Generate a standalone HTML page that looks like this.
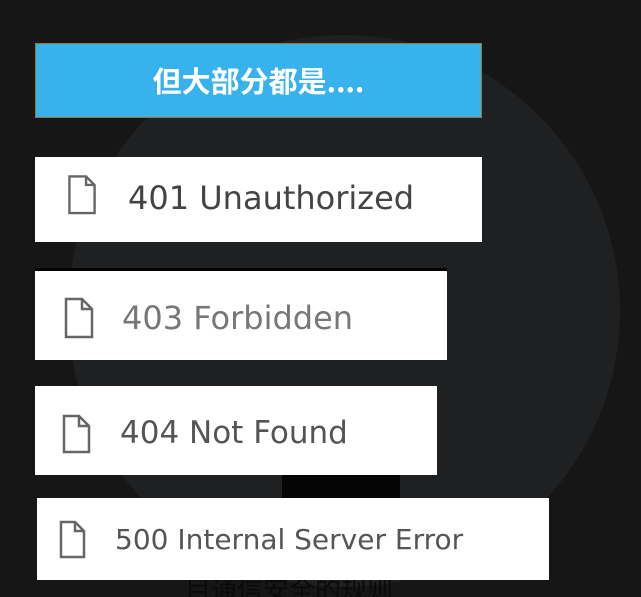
<!DOCTYPE html>
<html><head><meta charset="utf-8"><style>
html{margin:0;padding:0;width:641px;height:597px;overflow:hidden}
body{margin:0;padding:0;width:641px;height:597px;overflow:hidden;position:relative;background:#161616;font-family:"Liberation Sans","Noto Sans CJK SC",sans-serif}
.circle{position:absolute;left:68px;top:35px;width:552px;height:552px;border-radius:50%;background:#1f2022}
.blk{position:absolute;left:282px;top:470px;width:118px;height:70px;background:#050505;border-radius:0 0 40px 40px}
.bottomtxt{position:absolute;left:185px;top:574px;font-size:26px;line-height:30px;color:#0a0a0a;white-space:nowrap;font-family:"Noto Sans CJK SC",sans-serif}
.box{position:absolute;background:#fff}
.banner{position:absolute;left:35px;top:43px;width:445px;height:73px;background:#38b2ec;border:1px solid #9a7a2a;color:#fff;font-weight:bold;font-size:29px;text-align:center;line-height:73px;font-family:"Noto Sans CJK SC","Liberation Sans",sans-serif}
.t{position:absolute;font-family:"DejaVu Sans","Liberation Sans",sans-serif;color:#444;white-space:nowrap;line-height:36px}
svg{position:absolute}
</style></head><body>
<div class="circle"></div>
<div class="blk"></div>
<div class="bottomtxt">目通信安全的规则</div>
<div class="banner">但大部分都是....</div>

<div class="box" style="left:35px;top:157px;width:447px;height:85px"></div>
<svg style="left:68px;top:175px" width="30" height="42" viewBox="0 0 30 42"><path d="M1.5 1.5H19L28 10.5V40H1.5Z M19 1.5V10.5H28" fill="none" stroke="#666" stroke-width="2.5" transform="scale(0.95)"/></svg>
<div class="t" style="left:128px;top:180px;font-size:32px">401 Unauthorized</div>

<div class="box" style="left:35px;top:268px;width:412px;height:92px;border-top:3px solid #000;box-sizing:border-box"></div>
<svg style="left:64px;top:297px" width="32" height="42" viewBox="0 0 32 42"><path d="M2 2H18L28 12V40H2Z M18 2V12H28" fill="none" stroke="#666" stroke-width="2.5"/></svg>
<div class="t" style="left:122px;top:300px;font-size:32px;color:#777">403 Forbidden</div>

<div class="box" style="left:35px;top:386px;width:402px;height:89px"></div>
<svg style="left:62px;top:414px" width="30" height="40" viewBox="0 0 30 40"><path d="M2 2H17L27 12V38H2Z M17 2V12H27" fill="none" stroke="#666" stroke-width="2.5"/></svg>
<div class="t" style="left:120px;top:415px;font-size:31px;color:#555">404 Not Found</div>

<div class="box" style="left:37px;top:498px;width:512px;height:82px"></div>
<svg style="left:59px;top:520px" width="28" height="40" viewBox="0 0 28 40"><path d="M2 2H16L25 11V37H2Z M16 2V11H25" fill="none" stroke="#666" stroke-width="2.5"/></svg>
<div class="t" style="left:115px;top:522px;font-size:28px;color:#555">500 Internal Server Error</div>
</body></html>
